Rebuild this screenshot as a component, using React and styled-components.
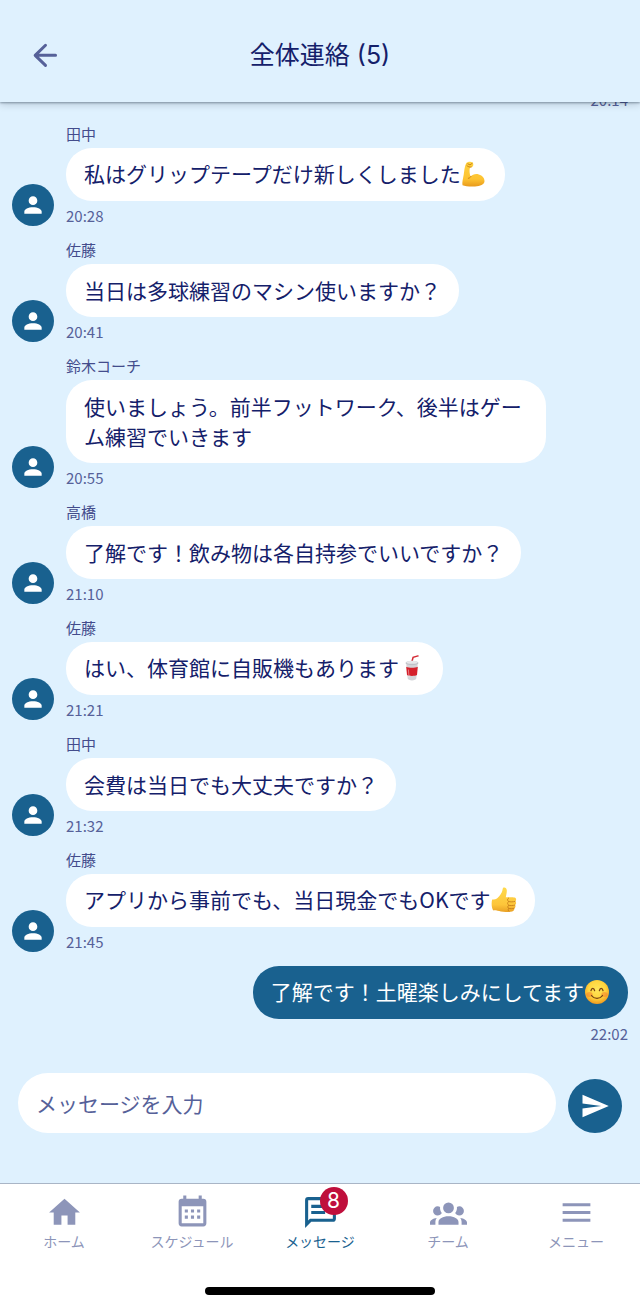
import React from 'react';
import styled, { createGlobalStyle, ThemeProvider } from 'styled-components';

const theme = {
  colors: {
    background: '#dff1fe',
    surface: '#ffffff',
    primary: '#19618f',
    text: '#14206a',
    name: '#434c8c',
    muted: '#566199',
    inactive: '#8d95b9',
    badge: '#bf0f3c',
  },
  fontSizes: {
    small: '14px',
    medium: '15px',
    large: '21px',
    xlarge: '25px',
  },
};

const GlobalStyle = createGlobalStyle`
  * {
    box-sizing: border-box;
  }

  body {
    margin: 0;
    font-family: 'Noto Sans CJK JP', sans-serif;
  }
`;

const Screen = styled.div`
  display: flex;
  flex-direction: column;
  height: 100vh;
  overflow: hidden;
  background: ${props => props.theme.colors.background};
  color: ${props => props.theme.colors.text};
`;

const Header = styled.header`
  display: grid;
  grid-template-columns: 48px 1fr 48px;
  align-items: center;
  flex: none;
  height: 102px;
  padding: 8px 20px 0;
  background: ${props => props.theme.colors.background};
  box-shadow: 0 1px 2px rgba(0, 20, 40, 0.35), 0 2px 8px rgba(0, 20, 40, 0.2);
  z-index: 1;
`;

const Title = styled.h1`
  margin: 0;
  text-align: center;
  font-family: Inter, 'Noto Sans CJK JP', sans-serif;
  font-size: ${props => props.theme.fontSizes.xlarge};
  font-weight: 400;
  line-height: 36px;
`;

const IconButton = styled.button`
  display: flex;
  align-items: center;
  justify-content: center;
  width: 48px;
  height: 48px;
  padding: 0;
  border: 0;
  background: none;
  color: ${props => props.theme.colors.muted};
  cursor: pointer;
`;

const MessageList = styled.main`
  display: flex;
  flex: 1;
  flex-direction: column;
  justify-content: flex-end;
  gap: 14px;
  min-height: 0;
  padding: 0 12px;
  overflow: hidden;
`;

const MessageRow = styled.article`
  display: flex;
  flex: none;
  align-items: flex-end;
  justify-content: ${props => (props.$own ? 'flex-end' : 'flex-start')};
  gap: 12px;
`;

const Avatar = styled.div`
  display: flex;
  align-items: center;
  justify-content: center;
  flex: none;
  width: 42px;
  height: 42px;
  border-radius: 50%;
  background: ${props => props.theme.colors.primary};
  color: #fff;
`;

const MessageBody = styled.div`
  display: flex;
  flex-direction: column;
  align-items: ${props => (props.$own ? 'flex-end' : 'flex-start')};
  max-width: 78%;
`;

const Sender = styled.span`
  margin-bottom: 4px;
  font-size: ${props => props.theme.fontSizes.medium};
  line-height: 20px;
  color: ${props => props.theme.colors.name};
`;

const Bubble = styled.p`
  margin: 0 0 5px;
  padding: ${props => (props.$emoji ? '10px 18px 13px' : '11px 18px 12px')};
  border-radius: 26px;
  background: ${props => (props.$own ? props.theme.colors.primary : props.theme.colors.surface)};
  color: ${props => (props.$own ? '#fff' : props.theme.colors.text)};
  font-size: ${props => props.theme.fontSizes.large};
  line-height: 30px;
`;

const Time = styled.time`
  font-size: ${props => props.theme.fontSizes.medium};
  line-height: 20px;
  color: ${props => props.theme.colors.muted};
`;

const EmojiSvg = styled.svg`
  width: 26px;
  height: 26px;
  vertical-align: -5px;
`;

const Composer = styled.form`
  display: flex;
  flex: none;
  align-items: flex-end;
  gap: 12px;
  padding: 29px 18px 50px;
`;

const MessageInput = styled.input`
  flex: 1;
  min-width: 0;
  height: 60px;
  padding: 0 18px;
  border: 0;
  border-radius: 30px;
  outline: none;
  background: ${props => props.theme.colors.surface};
  color: ${props => props.theme.colors.text};
  font-family: inherit;
  font-size: ${props => props.theme.fontSizes.large};

  &::placeholder {
    color: ${props => props.theme.colors.muted};
    opacity: 1;
  }
`;

const SendButton = styled(IconButton)`
  width: 54px;
  height: 54px;
  border-radius: 50%;
  background: ${props => props.theme.colors.primary};
  color: #fff;
`;

const BottomBar = styled.footer`
  flex: none;
  padding-bottom: 12px;
  border-top: 1px solid #a9b5c6;
  background: ${props => props.theme.colors.surface};
`;

const Tabs = styled.nav`
  display: grid;
  grid-template-columns: repeat(5, 1fr);
  padding: 10px 0 37px;
`;

const Tab = styled.a`
  display: flex;
  flex-direction: column;
  align-items: center;
  gap: 1px;
  color: ${props => (props.$active ? props.theme.colors.primary : props.theme.colors.inactive)};
  font-size: ${props => props.theme.fontSizes.small};
  line-height: 18px;
  text-decoration: none;
`;

const TabIcon = styled.span`
  position: relative;
  display: flex;
`;

const Badge = styled.span`
  position: absolute;
  top: -7px;
  right: -9px;
  width: 28px;
  height: 28px;
  border-radius: 50%;
  background: ${props => props.theme.colors.badge};
  color: #fff;
  text-align: center;
  font-family: Inter, sans-serif;
  font-size: ${props => props.theme.fontSizes.large};
  line-height: 28px;
`;

const HomeIndicator = styled.div`
  width: 36%;
  height: 8px;
  margin: 0 auto;
  border-radius: 4px;
  background: #000;
`;

const paths = {
  person: 'M12 4a4 4 0 1 1 0 8 4 4 0 0 1 0-8m0 10c4.42 0 8 1.79 8 4v2H4v-2c0-2.21 3.58-4 8-4z',
  send: 'M2 21l21-9L2 3v7l15 2-15 2v7z',
  home: 'M10 20v-6h4v6h5v-8h3L12 3 2 12h3v8h5z',
  calendar:
    'M9 10v2H7v-2h2m4 0v2h-2v-2h2m4 0v2h-2v-2h2m2-7a2 2 0 0 1 2 2v14a2 2 0 0 1-2 2H5a2 2 0 0 1-2-2V5a2 2 0 0 1 2-2h1V1h2v2h8V1h2v2h1m0 16V8H5v11h14M9 14v2H7v-2h2m4 0v2h-2v-2h2m4 0v2h-2v-2h2z',
  message:
    'M4 2a2 2 0 0 0-2 2v18l4-4h14a2 2 0 0 0 2-2V4a2 2 0 0 0-2-2H4m0 2h16v12H5.17L4 17.17V4m2 3v2h12V7H6m0 4v2h9v-2H6z',
  team:
    'M12 5.5A3.5 3.5 0 0 1 15.5 9a3.5 3.5 0 0 1-3.5 3.5A3.5 3.5 0 0 1 8.5 9 3.5 3.5 0 0 1 12 5.5M5 8c.56 0 1.08.15 1.53.42-.15 1.43.27 2.85 1.13 3.96C7.16 13.34 6.16 14 5 14a3 3 0 0 1-3-3 3 3 0 0 1 3-3m14 0a3 3 0 0 1 3 3 3 3 0 0 1-3 3c-1.16 0-2.16-.66-2.66-1.62.86-1.11 1.28-2.53 1.13-3.96.45-.27.97-.42 1.53-.42M5.5 18.25c0-2.07 2.91-3.75 6.5-3.75s6.5 1.68 6.5 3.75V20h-13v-1.75M0 20v-1.5c0-1.39 1.89-2.56 4.45-2.9-.59.68-.95 1.62-.95 2.65V20H0m24 0h-3.5v-1.75c0-1.03-.36-1.97-.95-2.65 2.56.34 4.45 1.51 4.45 2.9V20z',
  menu: 'M3 6h18v2H3V6m0 5h18v2H3v-2m0 5h18v2H3v-2z',
};

const Icon = ({ name, size }) => (
  <svg width={size} height={size} viewBox="0 0 24 24" fill="currentColor" aria-hidden="true">
    <path d={paths[name]} />
  </svg>
);

const BackArrow = () => (
  <svg width="36" height="36" viewBox="0 0 24 24" aria-hidden="true">
    <path
      d="M19.7 12.200H6.300M13 5.500l-6.900 6.700 6.900 6.700"
      fill="none"
      stroke="currentColor"
      strokeWidth="2"
      strokeLinecap="round"
      strokeLinejoin="round"
    />
  </svg>
);

const Muscle = () => (
  <EmojiSvg viewBox="0 0 26 26" role="img" aria-label="力こぶ">
    <defs>
      <linearGradient id="muscle" x1="0" y1="0" x2="0" y2="1">
        <stop offset="0" stopColor="#ffd23f" />
        <stop offset="0.7" stopColor="#fdc332" />
        <stop offset="1" stopColor="#e89a1c" />
      </linearGradient>
    </defs>
    <path
      d="M5.2 2.300C6.500.5 10 .3 11.500 1.500c1 .8 1 2.500.5 3.600-.5 1.100-1.700 1.500-3 1.300-.9 2.500-.4 6.300.6 9.300 1.700-2.200 5-3.300 8.200-2.300 3.600 1.100 5.900 3.800 5.700 6.800-.3 3.300-4.200 5-9.500 5.200-5 .2-10-.1-12.500-1.200-.6-2.600.5-6.200 1.200-10.400.6-4 .8-8.400 2.500-11.500z"
      fill="url(#muscle)"
    />
    <path
      d="M5.800 4.500c1.200 1.300 2.800 1.900 4.400 1.500M6.800 2.800l2.200 1.100 2.200-1.600M10 15.400c-.7 1.200-1.600 1.700-2.700 1.900"
      fill="none"
      stroke="#c57c12"
      strokeWidth="0.900"
      strokeLinecap="round"
    />
  </EmojiSvg>
);

const Cup = () => (
  <EmojiSvg viewBox="0 0 26 26" role="img" aria-label="ドリンク">
    <path d="M12.800 7l1.300-4.600L19 .9" fill="none" stroke="#d42a34" strokeWidth="1.500" strokeLinecap="round" />
    <path d="M7.200 8h11.600l-1.500 15.600c-.2 2.400-8.400 2.400-8.600 0z" fill="#d3d4d8" />
    <path d="M7.200 11.800c3 1.300 8.600 1.300 11.600 0l-.8 8.200c-2.600 1.200-7.400 1.200-10 0z" fill="#d5202b" />
    <ellipse cx="13" cy="8" rx="6.500" ry="2.200" fill="#bfc1c7" />
    <ellipse cx="13" cy="7.300" rx="5.600" ry="1.500" fill="#e6e7ea" />
    <path d="M9.400 14.500l.6 8" stroke="#fff" strokeWidth="1" opacity="0.400" />
  </EmojiSvg>
);

const ThumbsUp = () => (
  <EmojiSvg viewBox="0 0 26 26" role="img" aria-label="いいね">
    <defs>
      <linearGradient id="thumb" x1="0" y1="0" x2="0" y2="1">
        <stop offset="0" stopColor="#ffda4d" />
        <stop offset="0.7" stopColor="#fdc53a" />
        <stop offset="1" stopColor="#e9a024" />
      </linearGradient>
    </defs>
    <path
      d="M12.600.6c1.600-.5 3.100.7 3.200 2.700.1 2.400-.6 4.700-1 7 3-.1 7.400-.2 8.800.2 1.900.5 2 3 .6 3.800 1.300.8 1.200 3-.2 3.600.9.900.6 2.900-.8 3.300.5 1.500-.5 2.800-2 3.200-2.600.7-8 1-11.300.2-2.500-.6-4.700-1.400-7.700-1.200C.7 21.100.1 16.200 1.200 12.600c2.500-.1 4-.4 5.300-1.700 2.400-2.300 4.400-5 5-8 .2-1 .3-2 1.100-2.300z"
      fill="url(#thumb)"
    />
    <path
      d="M24 14.400c-2 .6-4.400.6-6.200.2m6 3.500c-2 .6-4.200.6-6 .2m5.300 3c-1.800.5-3.700.5-5.300.1M17.600 11c-1.500 1-1.500 2.700.2 3.600-1.600 1-1.500 2.900 0 3.700-1.400 1-1.300 2.500 0 3.200-.9.900-.8 2.100.2 2.900"
      fill="none"
      stroke="#c8801b"
      strokeWidth="0.900"
      strokeLinecap="round"
    />
  </EmojiSvg>
);

const Smile = () => (
  <EmojiSvg viewBox="0 0 26 26" role="img" aria-label="笑顔">
    <defs>
      <radialGradient id="smile" cx="0.5" cy="0.4" r="0.6">
        <stop offset="0" stopColor="#ffe75a" />
        <stop offset="0.6" stopColor="#ffd53e" />
        <stop offset="1" stopColor="#f29a1f" />
      </radialGradient>
    </defs>
    <circle cx="13" cy="13" r="12" fill="url(#smile)" />
    <ellipse cx="5.500" cy="15.500" rx="3.200" ry="2.500" fill="#f4702c" opacity="0.450" />
    <ellipse cx="20.500" cy="15.500" rx="3.200" ry="2.500" fill="#f4702c" opacity="0.450" />
    <path
      d="M7 11.600c.6-3 3-3 3.600 0m4.800 0c.6-3 3-3 3.600 0M7.500 16.500c2.600 3.700 8.400 3.700 11 0"
      fill="none"
      stroke="#7a4414"
      strokeWidth="1.300"
      strokeLinecap="round"
    />
  </EmojiSvg>
);

const messages = [
  { time: '20:14', own: true },
  { sender: '田中', text: '私はグリップテープだけ新しくしました', emoji: <Muscle />, time: '20:28' },
  { sender: '佐藤', text: '当日は多球練習のマシン使いますか？', time: '20:41' },
  { sender: '鈴木コーチ', text: '使いましょう。前半フットワーク、後半はゲーム練習でいきます', time: '20:55' },
  { sender: '高橋', text: '了解です！飲み物は各自持参でいいですか？', time: '21:10' },
  { sender: '佐藤', text: 'はい、体育館に自販機もあります', emoji: <Cup />, time: '21:21' },
  { sender: '田中', text: '会費は当日でも大丈夫ですか？', time: '21:32' },
  { sender: '佐藤', text: 'アプリから事前でも、当日現金でもOKです', emoji: <ThumbsUp />, time: '21:45' },
  { text: '了解です！土曜楽しみにしてます', emoji: <Smile />, time: '22:02', own: true },
];

const tabs = [
  { label: 'ホーム', icon: 'home' },
  { label: 'スケジュール', icon: 'calendar' },
  { label: 'メッセージ', icon: 'message', active: true, badge: 8 },
  { label: 'チーム', icon: 'team' },
  { label: 'メニュー', icon: 'menu' },
];

const Message = ({ sender, text, emoji, time, own }) => (
  <MessageRow $own={own}>
    {!own && (
      <Avatar>
        <Icon name="person" size={26} />
      </Avatar>
    )}
    <MessageBody $own={own}>
      {sender && <Sender>{sender}</Sender>}
      {text && (
        <Bubble $own={own} $emoji={Boolean(emoji)}>
          {text}
          {emoji}
        </Bubble>
      )}
      <Time>{time}</Time>
    </MessageBody>
  </MessageRow>
);

const App = () => {
  return (
    <ThemeProvider theme={theme}>
      <GlobalStyle />
      <Screen>
        <Header>
          <IconButton type="button" aria-label="戻る">
            <BackArrow />
          </IconButton>
          <Title>全体連絡 (5)</Title>
        </Header>
        <MessageList>
          {messages.map(message => (
            <Message key={message.time} {...message} />
          ))}
        </MessageList>
        <Composer onSubmit={e => e.preventDefault()}>
          <MessageInput type="text" placeholder="メッセージを入力" aria-label="メッセージを入力" />
          <SendButton type="submit" aria-label="送信">
            <Icon name="send" size={30} />
          </SendButton>
        </Composer>
        <BottomBar>
          <Tabs>
            {tabs.map(({ label, icon, active, badge }) => (
              <Tab key={label} href="#" $active={active}>
                <TabIcon>
                  <Icon name={icon} size={37} />
                  {badge && <Badge>{badge}</Badge>}
                </TabIcon>
                {label}
              </Tab>
            ))}
          </Tabs>
          <HomeIndicator />
        </BottomBar>
      </Screen>
    </ThemeProvider>
  );
};

export default App;
